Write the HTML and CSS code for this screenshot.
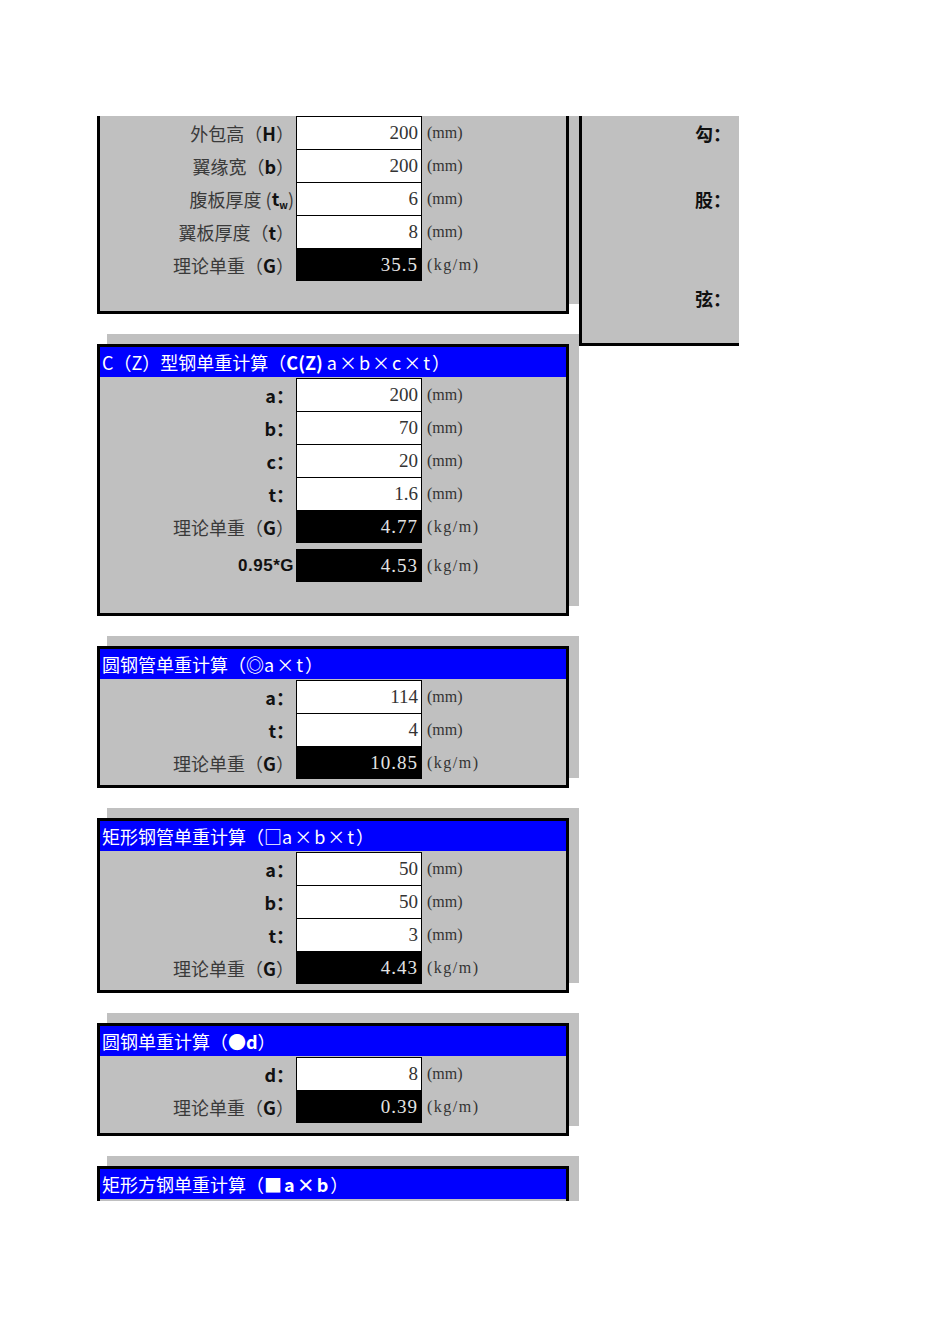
FILE: index.html
```html
<!DOCTYPE html>
<html lang="zh-CN">
<head>
<meta charset="utf-8">
<title>型钢单重计算</title>
<link rel="stylesheet" href="styles.css">
</head>
<body>
<div class="sheet">
  <div class="top">
    <div class="panel first pad-30">
      <div class="rows">
        <div class="row"><div class="lbl">外包高（<b>H</b>）</div><div class="val">200</div><div class="unit">(mm)</div></div>
        <div class="row"><div class="lbl">翼缘宽（<b>b</b>）</div><div class="val">200</div><div class="unit">(mm)</div></div>
        <div class="row"><div class="lbl">腹板厚度 (<b>t<sub>w</sub></b>)</div><div class="val">6</div><div class="unit">(mm)</div></div>
        <div class="row"><div class="lbl">翼板厚度（<b>t</b>）</div><div class="val">8</div><div class="unit">(mm)</div></div>
        <div class="row"><div class="lbl">理论单重（<b>G</b>）</div><div class="val res">35.5</div><div class="unit kg">(kg/m)</div></div>
      </div>
    </div>
    <div class="side">
      <div class="side-lbl r1">勾：</div>
      <div class="side-lbl r3">股：</div>
      <div class="side-lbl r6">弦：</div>
    </div>
  </div>

  <div class="panel pad-31">
    <div class="hdr">C（Z）型钢单重计算（<b>C(Z)</b> <span class="lat">a×b×c×t</span>）</div>
    <div class="rows">
      <div class="row"><div class="lbl"><b>a：</b></div><div class="val">200</div><div class="unit">(mm)</div></div>
      <div class="row"><div class="lbl"><b>b：</b></div><div class="val">70</div><div class="unit">(mm)</div></div>
      <div class="row"><div class="lbl"><b>c：</b></div><div class="val">20</div><div class="unit">(mm)</div></div>
      <div class="row"><div class="lbl"><b>t：</b></div><div class="val">1.6</div><div class="unit">(mm)</div></div>
      <div class="row"><div class="lbl">理论单重（<b>G</b>）</div><div class="val res">4.77</div><div class="unit kg">(kg/m)</div></div>
      <div class="row extra"><div class="lbl"><b class="num">0.95*G</b></div><div class="val res">4.53</div><div class="unit kg">(kg/m)</div></div>
    </div>
  </div>

  <div class="panel pad-6">
    <div class="hdr">圆钢管单重计算（<b>◎</b><span class="lat">a×t</span>）</div>
    <div class="rows">
      <div class="row"><div class="lbl"><b>a：</b></div><div class="val">114</div><div class="unit">(mm)</div></div>
      <div class="row"><div class="lbl"><b>t：</b></div><div class="val">4</div><div class="unit">(mm)</div></div>
      <div class="row"><div class="lbl">理论单重（<b>G</b>）</div><div class="val res">10.85</div><div class="unit kg">(kg/m)</div></div>
    </div>
  </div>

  <div class="panel pad-6">
    <div class="hdr">矩形钢管单重计算（<b>□</b><span class="lat">a×b×t</span>）</div>
    <div class="rows">
      <div class="row"><div class="lbl"><b>a：</b></div><div class="val">50</div><div class="unit">(mm)</div></div>
      <div class="row"><div class="lbl"><b>b：</b></div><div class="val">50</div><div class="unit">(mm)</div></div>
      <div class="row"><div class="lbl"><b>t：</b></div><div class="val">3</div><div class="unit">(mm)</div></div>
      <div class="row"><div class="lbl">理论单重（<b>G</b>）</div><div class="val res">4.43</div><div class="unit kg">(kg/m)</div></div>
    </div>
  </div>

  <div class="panel pad-10">
    <div class="hdr">圆钢单重计算（<b>●d</b>）</div>
    <div class="rows">
      <div class="row"><div class="lbl"><b>d：</b></div><div class="val">8</div><div class="unit">(mm)</div></div>
      <div class="row"><div class="lbl">理论单重（<b>G</b>）</div><div class="val res">0.39</div><div class="unit kg">(kg/m)</div></div>
    </div>
  </div>

  <div class="panel last">
    <div class="hdr">矩形方钢单重计算（<b class="lat">■a×b</b>）</div>
    <div class="rows filler"></div>
  </div>
</div>
</body>
</html>
```

FILE: styles.css
```css
html, body {
  margin: 0;
  padding: 0;
  background: #ffffff;
}

body {
  font-family: "Noto Sans CJK SC", "Liberation Sans", sans-serif;
  font-size: 18px;
  color: #333333;
  padding-top: 116px;
}

.sheet {
  margin-left: 97px;
  height: 1085px;
  overflow: hidden;
}

.top {
  display: flex;
  gap: 10px;
  align-items: flex-start;
  height: 198px;
}

.panel {
  width: 466px;
  background: #c0c0c0;
  border: 3px solid #000000;
  box-shadow: 10px -10px 0 0 #c0c0c0;
  margin-top: 30px;
}

.panel.first {
  border-top: none;
  margin-top: 0;
}

.panel.last {
  border-bottom: none;
}

.pad-30 { padding-bottom: 30px; }
.pad-31 { padding-bottom: 31px; }
.pad-6 { padding-bottom: 6px; }
.pad-10 { padding-bottom: 10px; }

.hdr {
  height: 30px;
  background: #0000ff;
  color: #ffffff;
  line-height: 30px;
  padding-left: 2px;
  white-space: nowrap;
  font-size: 18px;
}

.hdr b {
  font-weight: 700;
}

.hdr .lat {
  letter-spacing: 2px;
}

.rows {
  padding-top: 1px;
}

.panel.first .rows {
  padding-top: 0;
}

.rows.filler {
  height: 60px;
}

.row {
  display: grid;
  grid-template-columns: 196px 126px 1fr;
  height: 33px;
}

.row.extra {
  margin-top: 6px;
}

.lbl {
  display: flex;
  align-items: center;
  justify-content: flex-end;
  padding-right: 2px;
  white-space: nowrap;
  font-size: 18px;
  color: #3a3a3a;
}

.lbl b {
  font-weight: 700;
  color: #111111;
}

.lbl sub {
  font-size: 10px;
  vertical-align: -3px;
}

.lbl .num {
  font-family: "Liberation Sans", "Noto Sans CJK SC", sans-serif;
  font-size: 17px;
  letter-spacing: 0.5px;
}

.val {
  box-sizing: border-box;
  background: #ffffff;
  border: 1px solid #000000;
  border-bottom: none;
  display: flex;
  align-items: center;
  justify-content: flex-end;
  padding-right: 3px;
  font-family: "Liberation Serif", serif;
  font-size: 19px;
  color: #333333;
}

.val.res {
  background: #000000;
  color: #e4e4e4;
  letter-spacing: 1px;
}

.unit {
  display: flex;
  align-items: center;
  padding-left: 5px;
  font-family: "Liberation Serif", serif;
  font-size: 16px;
  color: #333333;
  white-space: nowrap;
}

.unit.kg {
  letter-spacing: 1.5px;
}

.side {
  box-sizing: border-box;
  flex: none;
  width: 160px;
  height: 230px;
  background: #c0c0c0;
  border-left: 3px solid #000000;
  border-bottom: 3px solid #000000;
  display: grid;
  grid-template-rows: repeat(7, 33px);
}

.side-lbl {
  display: flex;
  align-items: center;
  justify-content: flex-end;
  padding-right: 8px;
  font-weight: 700;
  font-size: 18px;
  color: #111111;
}

.side-lbl.r1 { grid-row: 1; }
.side-lbl.r3 { grid-row: 3; }
.side-lbl.r6 { grid-row: 6; }
```
